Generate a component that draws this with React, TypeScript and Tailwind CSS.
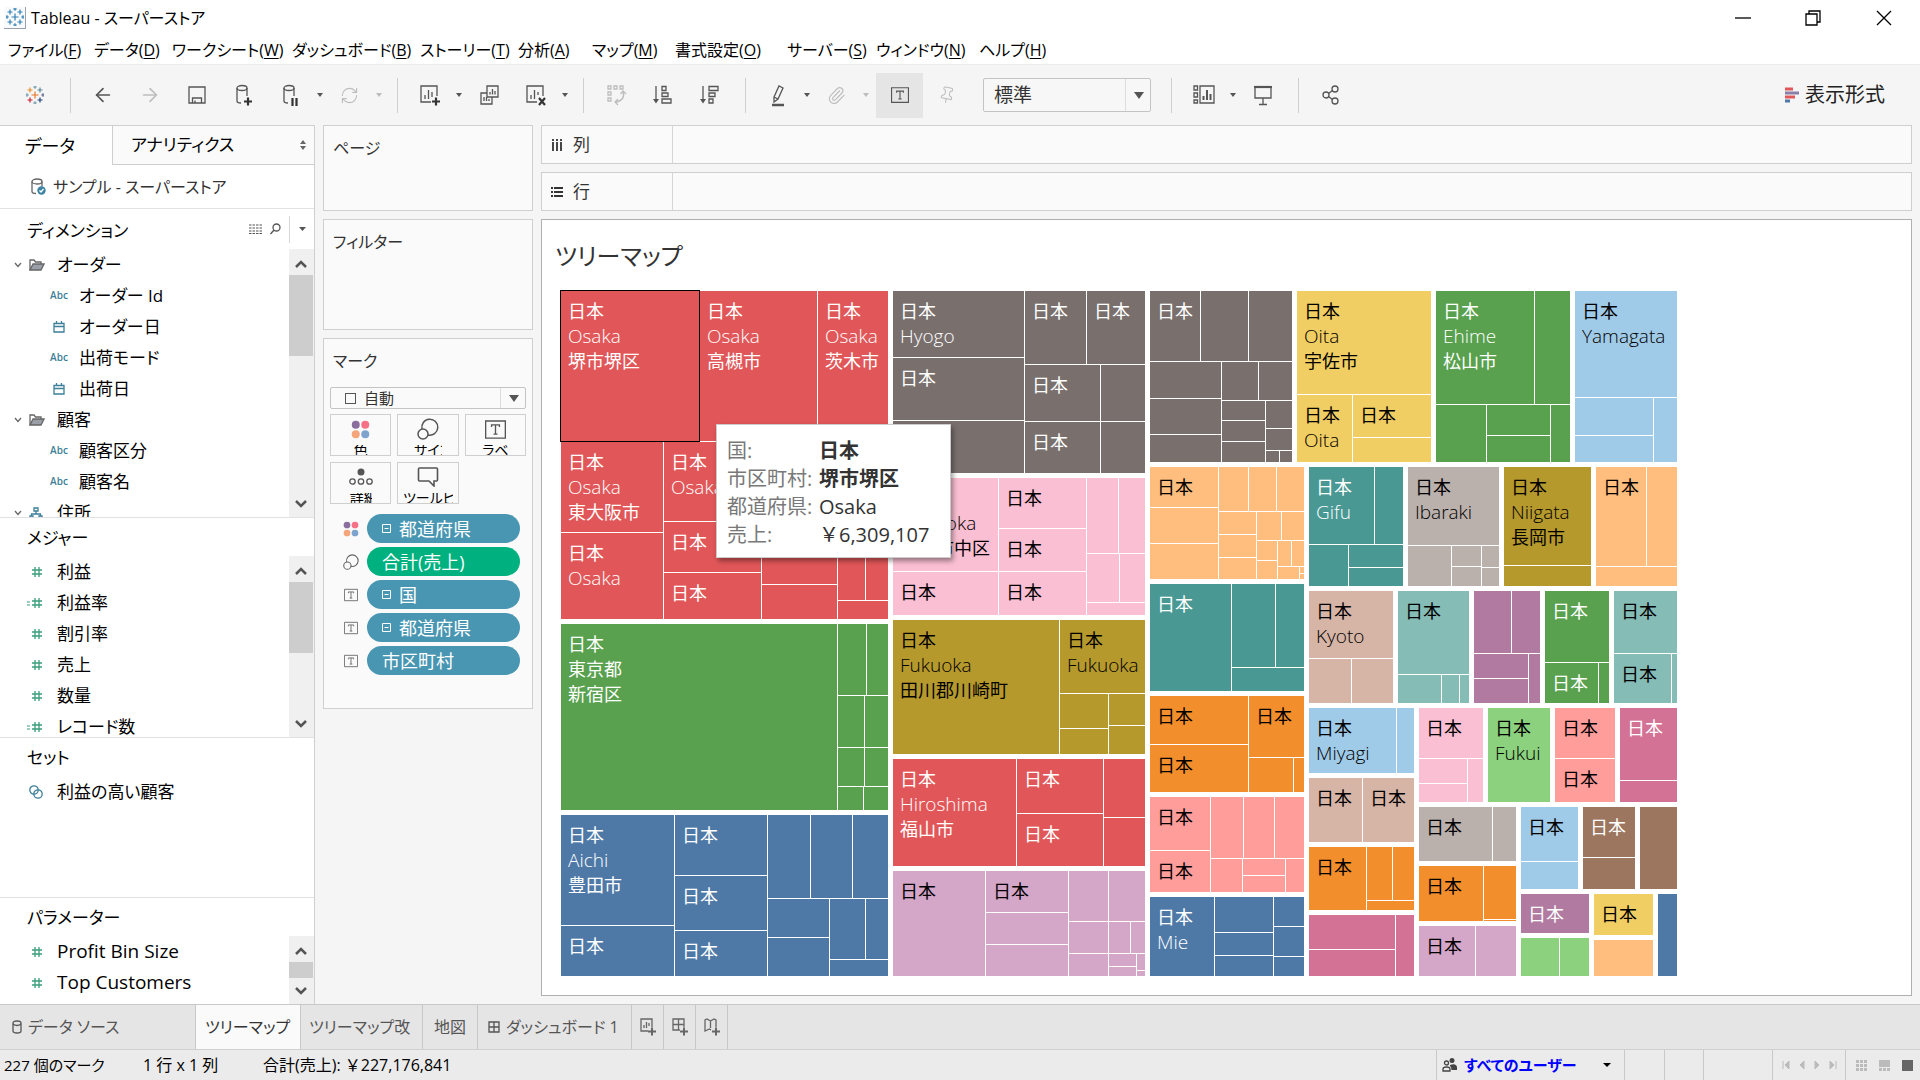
import type { ReactNode } from 'react'
import { ArrowLeft, ArrowRight, Paperclip, Pin, RefreshCw } from 'lucide-react'
import clsx from 'clsx'

/* ---------- treemap data ---------- */

interface MapNode {
    size: number
    dir?: 'row' | 'col'
    kids?: MapNode[]
    labels?: string[]
    tone?: string
    selected?: boolean
}
type Kid = MapNode | number

const toNode = (kid: Kid): MapNode => (typeof kid === 'number' ? { size: kid } : kid)
const row = (size: number, ...kids: Kid[]): MapNode => ({ size, dir: 'row', kids: kids.map(toNode) })
const col = (size: number, ...kids: Kid[]): MapNode => ({ size, dir: 'col', kids: kids.map(toNode) })
const cell = (size: number, ...labels: string[]): MapNode => ({ size, labels })
const jp = (size: number, ...labels: string[]): MapNode => ({ size, labels: ['日本', ...labels] })
const paint = (tone: string, node: MapNode): MapNode => ({ ...node, tone })

const red = 'bg-[#e15759] text-white'
const green = 'bg-[#59a14f] text-white'
const blue = 'bg-[#4e79a7] text-white'
const gray = 'bg-[#79706e] text-white'
const pink = 'bg-[#fabfd2] text-black'
const olive = 'bg-[#b6992d] text-black'
const mauve = 'bg-[#d4a6c8] text-black'
const yellow = 'bg-[#f1ce63] text-black'
const sky = 'bg-[#a0cbe8] text-black'
const peach = 'bg-[#ffbe7d] text-black'
const teal = 'bg-[#499894] text-white'
const orange = 'bg-[#f28e2b] text-black'
const salmon = 'bg-[#ff9d9a] text-black'
const tan = 'bg-[#d7b5a6] text-black'
const mint = 'bg-[#86bcb6] text-black'
const purple = 'bg-[#b07aa1] text-white'
const lime = 'bg-[#8cd17d] text-black'
const magenta = 'bg-[#d37295] text-white'
const taupe = 'bg-[#bab0ac] text-black'
const brown = 'bg-[#9d7660] text-white'

const west = col(
    327,
    paint(
        red,
        col(
            328,
            row(150, { ...jp(138, 'Osaka', '堺市堺区'), selected: true }, jp(117, 'Osaka', '高槻市'), jp(70, 'Osaka', '茨木市')),
            row(
                177,
                col(102, jp(90, 'Osaka', '東大阪市'), jp(86, 'Osaka')),
                col(97, jp(79, 'Osaka'), jp(50), jp(46)),
                col(75, 142, 34),
                col(50, row(158, 27, 22), 18)
            )
        )
    ),
    paint(
        green,
        row(186, jp(276, '東京都', '新宿区'), col(50, row(71, 28, 21), row(51, 26, 23), row(38, 26, 23), row(23, 25, 24)))
    ),
    paint(
        blue,
        row(
            161,
            col(113, jp(110, 'Aichi', '豊田市'), jp(50)),
            col(92, jp(60), jp(54), jp(45)),
            col(120, row(83, 42, 41, 35), row(77, col(61, 38, 38), col(58, row(60, 35, 22), 16)))
        )
    )
)

const middle = col(
    252,
    paint(
        gray,
        row(
            182,
            col(131, jp(66, 'Hyogo'), jp(62), jp(52)),
            col(120, row(73, jp(61), jp(58)), row(56, jp(75), 44), row(51, jp(75), 44))
        )
    ),
    paint(
        pink,
        row(
            137,
            col(105, jp(93, 'Shizuoka', '浜松市中区'), jp(43)),
            col(87, jp(50), jp(42), jp(43)),
            col(58, row(75, 31, 26), row(48, 32, 25), 12)
        )
    ),
    paint(
        olive,
        row(134, jp(166, 'Fukuoka', '田川郡川崎町'), col(85, jp(73, 'Fukuoka'), row(60, col(48, 34, 25), col(36, 31, 28))))
    ),
    paint(red, row(107, jp(123, 'Hiroshima', '福山市'), col(86, jp(54), jp(52)), col(41, 58, 48))),
    paint(
        mauve,
        row(
            105,
            jp(92),
            col(82, jp(41), 31, 31),
            col(
                76,
                row(50, 39, 36),
                row(54, col(39, 31, 22), col(36, row(31, 21, 14), row(22, col(27, 12, 9), col(8, 16, 5))))
            )
        )
    )
)

const northEast = row(
    171,
    paint(
        gray,
        col(
            142,
            row(70, jp(50), 47, 43),
            row(
                100,
                col(71, 36, 35, 27),
                col(70, row(38, 36, 33), row(61, col(43, 19, 20, 20), col(26, 27, 21, row(11, 13, 12))))
            )
        )
    ),
    paint(yellow, col(134, jp(103, 'Oita', '宇佐市'), row(67, jp(55, 'Oita'), col(78, jp(42), 24)))),
    paint(green, col(134, row(113, jp(98, 'Ehime', '松山市'), 35), row(57, 50, col(63, 30, 26), 19))),
    paint(sky, col(102, jp(106, 'Yamagata'), row(64, col(78, 37, 26), 23)))
)

const centerEast = col(
    154,
    paint(
        peach,
        row(
            112,
            col(68, jp(40), 35, 35),
            col(
                85,
                row(44, 29, 27, 27),
                row(
                    67,
                    col(37, 22, 22, 21),
                    col(47, row(28, 24, 22), row(38, col(20, 19, 18), col(26, row(25, 13, 12), row(12, 21, col(4, 6, 5)))))
                )
            )
        )
    ),
    paint(teal, row(107, jp(81), col(72, row(83, 43, 28), 23))),
    paint(orange, row(96, col(98, jp(48), jp(47)), col(55, jp(61), row(34, 44, 10)))),
    paint(salmon, row(95, col(60, jp(53), jp(41)), col(93, row(61, 32, 30, 29), row(33, 31, col(42, 16, 16), 18)))),
    paint(blue, row(79, jp(64, 'Mie'), col(58, 35, 22, 20), col(30, 29, 29, 19)))
)

const farEast = col(
    368,
    row(
        119,
        paint(teal, col(94, row(77, jp(65, 'Gifu'), 28), row(41, 39, col(54, 22, 18)))),
        paint(taupe, col(91, jp(78, 'Ibaraki'), row(40, 43, col(29, 20, 19), col(17, 21, 18)))),
        paint(olive, col(87, jp(98, 'Niigata', '長岡市'), 20)),
        paint(peach, col(81, row(99, jp(50), 30), 19))
    ),
    row(
        112,
        paint(tan, col(84, jp(67, 'Kyoto'), row(44, 42, 41))),
        paint(mint, col(71, jp(83), row(28, 43, 17, 9))),
        paint(purple, col(66, row(62, 37, 28), row(49, col(54, 24, 24), 11))),
        paint(green, col(64, jp(71), row(40, jp(53), 10))),
        paint(mint, col(63, jp(62), row(49, jp(57), 5)))
    ),
    row(
        268,
        col(
            105,
            paint(sky, row(65, jp(87, 'Miyagi'), 17)),
            paint(tan, row(64, jp(53), jp(51))),
            paint(orange, row(63, jp(57), col(47, row(53, 25, 21), 9))),
            paint(magenta, row(61, col(86, 34, 26), 18))
        ),
        col(
            258,
            row(
                94,
                paint(pink, col(64, jp(50), row(43, col(48, 24, 18), 15))),
                paint(lime, jp(62, 'Fukui')),
                paint(salmon, col(60, jp(50), jp(43))),
                paint(magenta, col(57, jp(72), 21))
            ),
            row(
                169,
                col(
                    97,
                    paint(taupe, row(54, jp(73), 23)),
                    paint(orange, row(55, jp(64), col(32, 53, 1))),
                    paint(mauve, row(50, jp(56), 40))
                ),
                col(
                    156,
                    row(
                        82,
                        paint(sky, col(57, jp(54), 27)),
                        paint(brown, col(52, jp(50), 31)),
                        paint(brown, cell(37))
                    ),
                    row(
                        82,
                        col(68, paint(purple, jp(39)), paint(lime, row(38, 38, 29))),
                        col(59, paint(yellow, jp(41)), paint(peach, cell(36))),
                        paint(blue, cell(19))
                    )
                )
            )
        )
    )
)

const treemap = row(1116, west, middle, col(527, northEast, row(509, centerEast, farEast)))

function Tile({ node, tone }: { node: MapNode; tone?: string }) {
    const fill = node.tone ?? tone
    const style = { flexGrow: node.size }
    if (node.kids) {
        return (
            <div
                style={style}
                className={clsx(
                    'flex min-h-0 min-w-0 basis-0',
                    node.dir === 'col' ? 'flex-col' : 'flex-row',
                    fill ? 'gap-px' : 'gap-[5px]'
                )}
            >
                {node.kids.map((kid, i) => (
                    <Tile key={i} node={kid} tone={fill} />
                ))}
            </div>
        )
    }
    return (
        <div
            style={style}
            className={clsx(
                'min-h-0 min-w-0 basis-0 overflow-hidden whitespace-nowrap',
                fill,
                node.selected && 'relative z-10 ring-1 ring-black'
            )}
        >
            {node.labels && (
                <div className="pt-2 pl-[7px] leading-[25px]">
                    {node.labels.map((label) => (
                        <div key={label} className={/[a-z]/.test(label) ? 'text-[19px] leading-[25px] font-light' : 'text-lg leading-[25px]'}>
                            {label}
                        </div>
                    ))}
                </div>
            )}
        </div>
    )
}

/* ---------- icons ---------- */

function Svg({ w = 24, h = 24, children, className }: { w?: number; h?: number; children: ReactNode; className?: string }) {
    return (
        <svg
            width={w}
            height={h}
            viewBox={`0 0 ${w} ${h}`}
            fill="none"
            stroke="currentColor"
            strokeWidth="1.3"
            className={clsx('shrink-0', className)}
            aria-hidden="true"
        >
            {children}
        </svg>
    )
}

function Logo({ mono }: { mono?: boolean }) {
    const marks: [number, number, number, string][] = [
        [10, 10, 3.5, '#e8762c'],
        [5, 5, 2.5, '#e8912c'],
        [15, 5, 2.5, '#5b879b'],
        [5, 15, 2.5, '#c72035'],
        [15, 15, 2.5, '#1f457e'],
        [10, 2, 1.8, '#7199a6'],
        [10, 18, 1.8, '#7199a6'],
        [2, 10, 1.8, '#7199a6'],
        [18, 10, 1.8, '#5b6591'],
    ]
    return (
        <Svg w={18} h={18}>
            {marks.map(([x, y, r, color]) => (
                <path
                    key={`${x}-${y}`}
                    d={`M${x - r - 1} ${y - 1}H${x + r - 1}M${x - 1} ${y - r - 1}V${y + r - 1}`}
                    stroke={mono ? '#2f7fb5' : color}
                    strokeWidth="1.2"
                />
            ))}
        </Svg>
    )
}

function Caret({ className }: { className?: string }) {
    return (
        <svg width="10" height="7" viewBox="0 0 10 7" className={clsx('shrink-0', className)} aria-hidden="true">
            <path d="M0 0h10L5 7z" fill="currentColor" />
        </svg>
    )
}

const DataAdd = () => (
    <Svg>
        <ellipse cx="10" cy="5" rx="5" ry="2.5" />
        <path d="M5 5v13c0 1.500 2 2 4 2M15 5v8" />
        <path d="M12 18.500h8M16 14.500v8" strokeWidth="2.200" className="text-[#333]" />
    </Svg>
)
const DataPause = () => (
    <Svg>
        <ellipse cx="10" cy="5" rx="5" ry="2.5" />
        <path d="M5 5v13c0 1.500 2 2 4 2M15 5v8" />
        <path d="M13.500 15v8M17.500 15v8" strokeWidth="2.200" className="text-[#333]" />
    </Svg>
)
const Save = () => (
    <Svg w={18} h={18}>
        <path d="M1 1h16v16H1zM4.500 17v-5h9v5M7 17v-2.500" />
    </Svg>
)
const SheetAdd = () => (
    <Svg>
        <path d="M13 19H3V3h16v10M7 16v-4M10.500 16V7M14 14V9" />
        <path d="M14 18.500h8M18 14.500v8" strokeWidth="2.200" className="text-[#333]" />
    </Svg>
)
const SheetCopy = () => (
    <Svg>
        <path d="M10 3h11v11H10zM10 10H4v11h11v-7M13 11.500V9M15.500 11.500V6M18 11.500V8M7 18v-4M9.500 18v-4M12 18v-2" />
    </Svg>
)
const SheetClear = () => (
    <Svg>
        <path d="M13 19H3V3h16v10M7 16v-4M10.500 16V7M14 12V9" />
        <path d="M15 15l6 7M21 15l-6 7" strokeWidth="2.200" className="text-[#333]" />
    </Svg>
)
const Swap = () => (
    <Svg>
        <path d="M4 3h3v3H4zM10 3h3v3h-3zM16 3h3v3h-3zM4 9h3v3H4zM4 15h3v3H4zM19 9c2 5-1 9-7 10M16.500 11l2.500-3 3 3M14 16l-3 3 3 3" />
    </Svg>
)
const SortAsc = () => (
    <Svg>
        <path d="M5 3v14M11 3.500h4v4h-4zM11 10h6v3.500h-6zM11 16h9v4h-9z" />
        <path d="M2 16h6l-3 4.500z" fill="currentColor" stroke="none" />
    </Svg>
)
const SortDesc = () => (
    <Svg>
        <path d="M5 3v14M11 3.500h9v4h-9zM11 10h6v3.500h-6zM11 16h4v4h-4z" />
        <path d="M2 16h6l-3 4.500z" fill="currentColor" stroke="none" />
    </Svg>
)
const Highlighter = () => (
    <Svg>
        <path d="M8 14l5-11 4 2-5 11-4 3zM8 14l4 2" />
        <path d="M6 22h12" strokeWidth="2.500" />
    </Svg>
)
const FitCards = () => (
    <Svg>
        <path d="M2 3h3.500v4H2zM2 10h3.500v4H2zM2 17h3.500v3H2zM8 3h14v17H8z" />
        <path d="M11.500 17v-4M15 17V7M18.500 17v-6" strokeWidth="2" />
    </Svg>
)
const Present = () => (
    <Svg>
        <path d="M4 5v10h16V5M12 15v6M8 21.500h8" />
        <path d="M3 4h18" strokeWidth="2.200" />
    </Svg>
)
const Share = () => (
    <Svg>
        <circle cx="7" cy="12" r="3" />
        <circle cx="16" cy="6" r="3" />
        <circle cx="16" cy="18" r="3" />
        <path d="M9.500 10.500l4-3M9.500 13.500l4 3" />
    </Svg>
)
const TextMark = ({ size = 15 }: { size?: number }) => (
    <svg width={size} height={size} viewBox="0 0 16 16" fill="none" stroke="currentColor" className="shrink-0" aria-hidden="true">
        <path d="M.5 1.500h15v13H.5z" />
        <path d="M5 6V4.500h6V6M8 4.500v7M6.500 11.500h3" />
    </svg>
)
const ColorDots = ({ size = 19 }: { size?: number }) => (
    <svg width={size} height={size} viewBox="0 0 20 20" className="shrink-0" aria-hidden="true">
        <circle cx="5" cy="5" r="4.200" fill="#8a6f9e" />
        <circle cx="15" cy="5" r="4.200" fill="#f77186" />
        <circle cx="5" cy="15" r="4.200" fill="#f4a57a" />
        <circle cx="15" cy="15" r="4.200" fill="#7ea3cd" />
    </svg>
)
const SizeMark = ({ size = 22 }: { size?: number }) => (
    <svg width={size} height={size} viewBox="0 0 22 22" fill="none" stroke="currentColor" strokeWidth="1.500" className="shrink-0" aria-hidden="true">
        <path d="M5 11a8 8 0 1 1 6 6" />
        <circle cx="6" cy="16" r="5" />
    </svg>
)
const DetailMark = () => (
    <Svg w={24} h={18}>
        <circle cx="12" cy="4" r="3.500" fill="currentColor" stroke="none" />
        <circle cx="3.500" cy="13.500" r="2.700" />
        <circle cx="12" cy="13.500" r="2.700" />
        <circle cx="20.500" cy="13.500" r="2.700" />
    </Svg>
)
const TooltipMark = () => (
    <Svg w={22} h={20}>
        <path d="M2.500 1h17q1 0 1 1v11q0 1-1 1H17v5l-5-5H2.500q-1 0-1-1V2q0-1 1-1z" strokeWidth="1.600" />
    </Svg>
)
const HashMark = () => (
    <Svg w={12} h={12} className="text-[#3a9d7c]">
        <path d="M4 1v10M8 1v10M1 4h10M1 8h10" />
    </Svg>
)
const CalendarMark = () => (
    <Svg w={12} h={12} className="text-[#3d7f99]">
        <path d="M1 2.500h10v8.500H1zM1 5.500h10M3.500 0v3M8.500 0v3" />
    </Svg>
)
const Folder = () => (
    <Svg w={16} h={12} className="text-[#666]">
        <path d="M1 11V1h4l1.500 2H12v2" />
        <path d="M1 11l3-6h11l-3 6z" fill="#9a9fa8" />
    </Svg>
)
const Hierarchy = () => (
    <Svg w={14} h={12} className="text-[#3d7f99]">
        <path d="M5 1h4v3H5zM7 4v3M2.500 9V7h9v2M1 9h3v3H1zM10 9h3v3h-3z" />
    </Svg>
)
const Chevron = () => (
    <Svg w={8} h={6} className="text-[#666]">
        <path d="M1 1l3 3.500L7 1" />
    </Svg>
)
const SheetPlus = ({ d }: { d: string }) => (
    <Svg w={18} h={18} className="text-[#666]">
        <path d={d} />
        <path d="M9 13.500h8M13 9.500v8" strokeWidth="2" />
    </Svg>
)

/* ---------- chrome ---------- */

const menus = [
    { label: 'ファイル', hotkey: 'F', width: 'w-[86px]' },
    { label: 'データ', hotkey: 'D', width: 'w-[78px]' },
    { label: 'ワークシート', hotkey: 'W', width: 'w-[120px]' },
    { label: 'ダッシュボード', hotkey: 'B', width: 'w-[128px]' },
    { label: 'ストーリー', hotkey: 'T', width: 'w-[98px]' },
    { label: '分析', hotkey: 'A', width: 'w-[74px]' },
    { label: 'マップ', hotkey: 'M', width: 'w-[83px]' },
    { label: '書式設定', hotkey: 'O', width: 'w-[112px]' },
    { label: 'サーバー', hotkey: 'S', width: 'w-[89px]' },
    { label: 'ウィンドウ', hotkey: 'N', width: 'w-[103px]' },
    { label: 'ヘルプ', hotkey: 'H', width: 'w-[76px]' },
]

function TitleBar() {
    return (
        <header className="bg-white">
            <div className="flex h-[35px] items-center pl-1">
                <span className="flex h-[22px] w-[22px] items-center justify-center border-r border-b border-gray-400 bg-gray-50">
                    <Logo mono />
                </span>
                <h1 className="ml-[5px] text-base">Tableau - スーパーストア</h1>
                <div className="ml-auto flex">
                    <button aria-label="最小化" className="flex w-[70px] justify-center">
                        <Svg w={16} h={16}><path d="M0 8h16" /></Svg>
                    </button>
                    <button aria-label="元に戻す" className="flex w-[69px] justify-center">
                        <Svg w={16} h={16}><path d="M1 4h11v11H1zM4 4V1h11v11h-3" /></Svg>
                    </button>
                    <button aria-label="閉じる" className="flex w-[73px] justify-center">
                        <Svg w={16} h={16}><path d="M1 1l14 14M15 1L1 15" /></Svg>
                    </button>
                </div>
            </div>
            <nav className="flex h-[29px] items-center pl-2 text-base">
                {menus.map((menu) => (
                    <button key={menu.hotkey} className={clsx('shrink-0 text-left whitespace-nowrap', menu.width)}>
                        {menu.label}(<span className="underline underline-offset-2">{menu.hotkey}</span>)
                    </button>
                ))}
            </nav>
        </header>
    )
}

function Tool({ name, children, dim, active }: { name: string; children: ReactNode; dim?: boolean; active?: boolean }) {
    return (
        <button
            aria-label={name}
            className={clsx(
                'flex h-[45px] w-[47px] shrink-0 items-center justify-center',
                dim ? 'text-[#bdbdbd]' : 'text-[#555]',
                active && 'ml-1 bg-[#e5e5e5]'
            )}
        >
            {children}
        </button>
    )
}

function Drop({ dim }: { dim?: boolean }) {
    return (
        <button aria-label="その他" className={clsx('flex w-3 shrink-0 justify-center', dim ? 'text-[#bdbdbd]' : 'text-[#555]')}>
            <svg width="6" height="4" viewBox="0 0 6 4" aria-hidden="true">
                <path d="M0 0h6L3 4z" fill="currentColor" />
            </svg>
        </button>
    )
}

const Divider = () => <span className="mr-2 ml-3 h-[35px] w-px shrink-0 bg-[#cfcfcf]" />

function Toolbar() {
    return (
        <div className="flex h-[61px] items-center border-t border-[#ececec] bg-[#f5f5f5] pl-[11px]">
            <Tool name="スタート ページ"><Logo /></Tool>
            <Divider />
            <Tool name="元に戻す"><ArrowLeft size={22} strokeWidth={1.8} /></Tool>
            <Tool name="やり直し" dim><ArrowRight size={22} strokeWidth={1.8} /></Tool>
            <Tool name="保存"><Save /></Tool>
            <Tool name="新しいデータ ソース"><DataAdd /></Tool>
            <Tool name="自動更新の一時停止"><DataPause /></Tool>
            <Drop />
            <Tool name="更新" dim><RefreshCw size={19} strokeWidth={1.4} /></Tool>
            <Drop dim />
            <Divider />
            <Tool name="新しいワークシート"><SheetAdd /></Tool>
            <Drop />
            <Tool name="複製"><SheetCopy /></Tool>
            <Tool name="シートのクリア"><SheetClear /></Tool>
            <Drop />
            <Divider />
            <Tool name="行と列の交換" dim><Swap /></Tool>
            <Tool name="昇順"><SortAsc /></Tool>
            <Tool name="降順"><SortDesc /></Tool>
            <Divider />
            <Tool name="ハイライト"><Highlighter /></Tool>
            <Drop />
            <Tool name="メンバーのグループ化" dim><Paperclip size={19} strokeWidth={1.4} /></Tool>
            <Drop dim />
            <Tool name="マーク ラベルの表示" active><TextMark size={18} /></Tool>
            <Tool name="軸の固定" dim><Pin size={18} strokeWidth={1.4} className="rotate-12" /></Tool>
            <label className="relative ml-[13px] flex shrink-0 items-center">
                <span className="sr-only">サイズの調整</span>
                <select className="h-[34px] w-[168px] appearance-none rounded-xs border border-[#c4c4c4] bg-[#f7f7f7] pl-[10px] text-[19px] leading-8 text-[#333]">
                    <option>標準</option>
                    <option>幅を合わせる</option>
                    <option>ビュー全体</option>
                </select>
                <span className="pointer-events-none absolute right-0 flex h-[32px] w-[26px] items-center justify-center border-l border-[#ddd] text-[#555]">
                    <Caret />
                </span>
            </label>
            <span className="w-2" />
            <Divider />
            <Tool name="カードの表示"><FitCards /></Tool>
            <Drop />
            <Tool name="プレゼンテーション モード"><Present /></Tool>
            <Divider />
            <Tool name="共有"><Share /></Tool>
            <button className="mr-[35px] ml-auto flex items-center gap-[6px] text-xl text-[#222]">
                <Svg w={15} h={16}>
                    <path d="M1 2h8" stroke="#e15759" strokeWidth="3" />
                    <path d="M1 6h14" stroke="#8a7fa8" strokeWidth="3" />
                    <path d="M1 10h10" stroke="#e15759" strokeWidth="3" />
                    <path d="M1 14h5" stroke="#4e79a7" strokeWidth="3" />
                </Svg>
                表示形式
            </button>
        </div>
    )
}

/* ---------- data pane ---------- */

function ScrollBar({ thumb }: { thumb: string }) {
    return (
        <div className="flex w-[25px] shrink-0 flex-col bg-[#f0f0f0] pr-px text-[#555]">
            <span className="flex h-[26px] shrink-0 items-center justify-center pt-1">
                <Svg w={12} h={10}><path d="M1 8l5-5 5 5" strokeWidth="2.500" /></Svg>
            </span>
            <span className={clsx('shrink-0 bg-[#cdcdcd]', thumb)} />
            <span className="mt-auto flex h-[26px] shrink-0 items-center justify-center">
                <Svg w={12} h={10}><path d="M1 2l5 5 5-5" strokeWidth="2.500" /></Svg>
            </span>
        </div>
    )
}

const dimensions = [
    { kind: 'folder', name: 'オーダー' },
    { kind: 'abc', name: 'オーダー Id' },
    { kind: 'date', name: 'オーダー日' },
    { kind: 'abc', name: '出荷モード' },
    { kind: 'date', name: '出荷日' },
    { kind: 'folder', name: '顧客' },
    { kind: 'abc', name: '顧客区分' },
    { kind: 'abc', name: '顧客名' },
    { kind: 'tree', name: '住所' },
]

const measures = [
    { name: '利益' },
    { name: '利益率', calc: true },
    { name: '割引率' },
    { name: '売上' },
    { name: '数量' },
    { name: 'レコード数', calc: true },
]

function DimensionRow({ kind, name }: { kind: string; name: string }) {
    const parent = kind === 'folder' || kind === 'tree'
    return (
        <li className="h-[31px]">
            <button className="flex h-full w-full items-center text-left">
                {parent ? (
                    <span className="flex w-[57px] items-center gap-[7px] pl-[14px]">
                        <Chevron />
                        {kind === 'folder' ? <Folder /> : <Hierarchy />}
                    </span>
                ) : (
                    <span className="flex w-[79px] justify-center pl-[39px]">
                        {kind === 'abc' ? (
                            <span className="text-[10px] font-semibold text-[#3d7f99]">Abc</span>
                        ) : (
                            <CalendarMark />
                        )}
                    </span>
                )}
                {name}
            </button>
        </li>
    )
}

function MeasureRow({ name, calc }: { name: string; calc?: boolean }) {
    return (
        <li className="h-[31px]">
            <button className="flex h-full w-full items-center text-left">
                <span className="flex w-[57px] items-center pl-[27px] text-[#3a9d7c]">
                    <Svg w={4} h={12}>{calc && <path d="M0 5h3M0 8h3" strokeWidth="1" />}</Svg>
                    <HashMark />
                </span>
                {name}
            </button>
        </li>
    )
}

const paneTitle = 'pl-[27px] text-[17px] leading-6'

function DataPane() {
    return (
        <aside className="flex w-[315px] shrink-0 flex-col border-t border-r border-[#cfcfcf] bg-white">
            <div className="flex h-[39px] shrink-0 text-lg">
                <button className="w-[112px] pr-3">データ</button>
                <button className="flex flex-1 items-center justify-between border-b border-l border-[#cfcfcf] bg-[#fafafa] pr-2 pl-[18px] text-[17px]">
                    アナリティクス
                    <Svg w={6} h={10} className="text-[#666]">
                        <path d="M0 4l3-4 3 4zM0 6l3 4 3-4z" fill="currentColor" stroke="none" />
                    </Svg>
                </button>
            </div>
            <button className="flex h-[44px] shrink-0 items-center gap-[7px] border-b border-[#e2e2e2] pl-[31px] text-base text-[#333]">
                <Svg w={15} h={18} className="text-[#666]">
                    <ellipse cx="6" cy="3.500" rx="5" ry="2.500" />
                    <path d="M1 3.500v10c0 1.500 2 2 4 2M11 3.500v5" />
                    <circle cx="10.500" cy="12.500" r="4.200" fill="#3d83a3" stroke="none" />
                    <path d="M8.500 12.500l1.500 1.500 2.500-3" stroke="white" />
                </Svg>
                サンプル - スーパーストア
            </button>

            <section className="flex h-[309px] shrink-0 flex-col border-b border-[#e2e2e2]">
                <div className="flex h-[40px] shrink-0 items-center text-[#555]">
                    <h2 className={clsx(paneTitle, 'flex-1 pt-1 text-black')}>ディメンション</h2>
                    <button aria-label="リスト表示">
                        <Svg w={13} h={10}>
                            <path d="M0 1h13M0 4h13M0 7h13M0 9.500h13" strokeDasharray="2.500 1" strokeWidth="1.200" />
                        </Svg>
                    </button>
                    <button aria-label="検索" className="ml-2">
                        <Svg w={11} h={12}>
                            <circle cx="6.500" cy="4.500" r="3.500" />
                            <path d="M4 7l-3.500 4" />
                        </Svg>
                    </button>
                    <span className="ml-2 h-[27px] w-px bg-[#d5d5d5]" />
                    <button aria-label="メニュー" className="flex w-[24px] justify-center">
                        <svg width="7" height="4" viewBox="0 0 7 4"><path d="M0 0h7L3.500 4z" fill="currentColor" /></svg>
                    </button>
                </div>
                <div className="flex min-h-0 flex-1">
                    <ul className="flex-1 overflow-hidden text-[17px]">
                        {dimensions.map((field) => (
                            <DimensionRow key={field.name} {...field} />
                        ))}
                    </ul>
                    <ScrollBar thumb="h-[81px]" />
                </div>
            </section>

            <section className="flex h-[220px] shrink-0 flex-col border-b border-[#e2e2e2]">
                <h2 className={clsx(paneTitle, 'h-[38px] shrink-0 pt-2')}>メジャー</h2>
                <div className="flex min-h-0 flex-1">
                    <ul className="flex-1 overflow-hidden text-[17px]">
                        {measures.map((field) => (
                            <MeasureRow key={field.name} {...field} />
                        ))}
                    </ul>
                    <ScrollBar thumb="h-[71px]" />
                </div>
            </section>

            <section className="flex-1 border-b border-[#e2e2e2] text-[17px]">
                <h2 className={clsx(paneTitle, 'h-[38px] pt-2')}>セット</h2>
                <button className="flex h-[31px] w-full items-center pl-[29px]">
                    <Svg w={14} h={14} className="mr-[14px] text-[#3d7f99]">
                        <circle cx="5" cy="5" r="4.200" />
                        <circle cx="9" cy="9" r="4.200" />
                    </Svg>
                    利益の高い顧客
                </button>
            </section>

            <section className="flex h-[106px] shrink-0 flex-col">
                <h2 className={clsx(paneTitle, 'h-[38px] shrink-0 pt-2')}>パラメーター</h2>
                <div className="flex min-h-0 flex-1">
                    <ul className="flex-1 overflow-hidden text-[19px]">
                        <MeasureRow name="Profit Bin Size" />
                        <MeasureRow name="Top Customers" />
                    </ul>
                    <ScrollBar thumb="h-4" />
                </div>
            </section>
        </aside>
    )
}

/* ---------- shelves and marks ---------- */

const card = 'border border-[#cfcfcf] bg-[#fafafa] px-[6px]'
const cardTitle = 'pl-[3px] text-base leading-6 text-[#333]'

function MarkButton({ icon, label, width }: { icon: ReactNode; label: string; width: string }) {
    return (
        <button className="flex h-[42px] flex-col items-center border border-[#cfcfcf] bg-[#fafafa] text-[#555]">
            <span className="flex h-[26px] items-center pt-[2px]">{icon}</span>
            <span className={clsx('mt-1 flex h-[10px] items-center overflow-hidden text-sm whitespace-nowrap text-black', width)}>
                {label}
            </span>
        </button>
    )
}

const pills = [
    { icon: <ColorDots size={16} />, name: '都道府県', level: true },
    { icon: <SizeMark size={16} />, name: '合計(売上)', measure: true },
    { icon: <TextMark size={14} />, name: '国', level: true },
    { icon: <TextMark size={14} />, name: '都道府県', level: true },
    { icon: <TextMark size={14} />, name: '市区町村' },
]

function Cards() {
    return (
        <div className="flex w-[210px] shrink-0 flex-col gap-2">
            <section className={clsx(card, 'h-[86px] pt-[10px]')}>
                <h2 className={cardTitle}>ページ</h2>
            </section>
            <section className={clsx(card, 'h-[111px] pt-[10px]')}>
                <h2 className={cardTitle}>フィルター</h2>
            </section>
            <section className={clsx(card, 'pt-[10px] pb-[33px]')}>
                <h2 className={cardTitle}>マーク</h2>
                <label className="relative mt-[14px] flex items-center text-[#555]">
                    <span className="sr-only">マークの種類</span>
                    <select className="h-[22px] w-full appearance-none rounded-xs border border-[#c4c4c4] bg-[#fafafa] pl-[33px] text-[15px] leading-5 text-[#333]">
                        <option>自動</option>
                        <option>四角</option>
                        <option>円</option>
                    </select>
                    <span className="pointer-events-none absolute left-[15px] h-[11px] w-[11px] border border-[#555]" />
                    <span className="pointer-events-none absolute right-0 flex h-[20px] w-[26px] items-center justify-center border-l border-[#ddd]">
                        <Caret />
                    </span>
                </label>
                <div className="mt-[5px] grid grid-cols-3 gap-[6px]">
                    <MarkButton icon={<ColorDots />} label="色" width="w-[14px]" />
                    <MarkButton icon={<SizeMark />} label="サイズ" width="w-[28px]" />
                    <MarkButton icon={<TextMark size={21} />} label="ラベル" width="w-[26px]" />
                    <MarkButton icon={<DetailMark />} label="詳細" width="w-[22px]" />
                    <MarkButton icon={<TooltipMark />} label="ツールヒント" width="w-[50px]" />
                </div>
                <ul className="mt-[10px] flex flex-col gap-1">
                    {pills.map((pill, i) => (
                        <li key={i} className="flex items-center text-[#666]">
                            <span className="flex w-[37px] justify-center pl-1">{pill.icon}</span>
                            <button
                                className={clsx(
                                    'flex h-[29px] w-[153px] items-center gap-2 rounded-full pl-[15px] text-lg leading-6 text-white',
                                    pill.measure ? 'bg-[#00b180]' : 'bg-[#4996b2]'
                                )}
                            >
                                {pill.level && (
                                    <Svg w={9} h={9}><path d="M.5.5h8v8h-8zM2.500 4.500h4" strokeWidth="1" /></Svg>
                                )}
                                {pill.name}
                            </button>
                        </li>
                    ))}
                </ul>
            </section>
        </div>
    )
}

function Shelf({ name, icon }: { name: string; icon: ReactNode }) {
    return (
        <section className="flex h-[39px] shrink-0 border border-[#cfcfcf] bg-[#fafafa] text-[#555]">
            <h2 className="flex w-[131px] items-center gap-[10px] border-r border-[#d5d5d5] pl-[9px] text-[17px] text-[#333]">
                {icon}
                {name}
            </h2>
        </section>
    )
}

function MapTooltip() {
    const fields = [
        ['国:', '日本'],
        ['市区町村:', '堺市堺区'],
        ['都道府県:', 'Osaka'],
        ['売上:', '￥6,309,107'],
    ]
    return (
        <dl className="absolute top-[133px] left-[155px] z-20 grid h-[134px] w-[235px] grid-cols-[92px_1fr] content-center border border-[#ccc] bg-white pt-1 pl-[10px] text-xl leading-7 whitespace-nowrap text-[#333] shadow-[2px_3px_5px_rgba(0,0,0,0.4)]">
            {fields.map(([name, value], i) => (
                <div key={name} className="contents">
                    <dt className="text-[#787878]">{name}</dt>
                    <dd className={clsx(i < 2 && 'font-bold', i === 3 && '[font-feature-settings:normal]')}>{value}</dd>
                </div>
            ))}
        </dl>
    )
}

function Worksheet() {
    return (
        <main className="flex min-w-0 flex-1 flex-col gap-2">
            <Shelf
                name="列"
                icon={<Svg w={12} h={12}><path d="M2 0v2M6 0v2M10 0v2M2 3v9M6 3v9M10 3v9" strokeWidth="1.800" /></Svg>}
            />
            <Shelf
                name="行"
                icon={<Svg w={12} h={12}><path d="M0 2h2M0 6h2M0 10h2M3 2h9M3 6h9M3 10h9" strokeWidth="1.800" /></Svg>}
            />
            <section className="flex min-h-0 flex-1 flex-col border border-[#b0b0b0] bg-white pr-[234px] pb-[19px] pl-[19px]">
                <h2 className="-ml-[6px] flex h-[71px] shrink-0 items-center text-2xl text-[#333]">ツリーマップ</h2>
                <div className="relative flex min-h-0 flex-1">
                    <Tile node={treemap} />
                    <MapTooltip />
                </div>
            </section>
        </main>
    )
}

/* ---------- bottom bars ---------- */

function SheetTabs() {
    const tab = 'flex items-center border-r border-[#c8c8c8] whitespace-nowrap'
    return (
        <nav className="flex h-[45px] shrink-0 border-t border-[#c8c8c8] bg-[#e5e5e5] text-base text-[#555]">
            <button className={clsx(tab, 'w-[196px] gap-[6px] pl-3')}>
                <Svg w={10} h={14}>
                    <path d="M1 3q0-2 4-2t4 2v8q0 2-4 2t-4-2zM1 3.500q1 2 4 2t4-2" />
                </Svg>
                データ ソース
            </button>
            <button className={clsx(tab, 'w-[105px] pl-[9px] bg-[#fafafa] text-[#333]')}>ツリーマップ</button>
            <button className={clsx(tab, 'w-[122px] pl-2')}>ツリーマップ改</button>
            <button className={clsx(tab, 'w-[55px] justify-center')}>地図</button>
            <button className={clsx(tab, 'w-[154px] gap-[6px] pl-[10px]')}>
                <Svg w={12} h={12}><path d="M1 1h10v10H1zM6 1v10M1 6h10" /></Svg>
                ダッシュボード 1
            </button>
            <button aria-label="新しいワークシート" className={clsx(tab, 'w-8 justify-center')}>
                <SheetPlus d="M9 13H2V1h11v8M5 10V7M7.500 10V4M10 8V5" />
            </button>
            <button aria-label="新しいダッシュボード" className={clsx(tab, 'w-8 justify-center')}>
                <SheetPlus d="M9 12H2V1h11v8M7.500 1v11M2 6.500h11" />
            </button>
            <button aria-label="新しいストーリー" className={clsx(tab, 'w-8 justify-center')}>
                <SheetPlus d="M8 12l-1.500-1L2 13V2l2-1 3.500 2L11 1l2 1v7M7.500 3v7" />
            </button>
        </nav>
    )
}

function StatusBar() {
    const box = 'h-full border-l border-[#c8c8c8]'
    return (
        <footer className="flex h-[31px] shrink-0 items-center border-t border-[#d0d0d0] bg-[#ebebeb] text-[15px] whitespace-nowrap">
            <span className="w-[139px] pl-1">227 個のマーク</span>
            <span className="w-[124px] pl-1 text-base">1 行 x 1 列</span>
            <span className="text-base [font-feature-settings:normal]">合計(売上): ￥227,176,841</span>
            <button className={clsx(box, 'ml-auto flex w-[188px] items-center pl-[5px] font-bold text-[#0000ff]')}>
                <Svg w={15} h={14} className="mr-[7px] text-[#444]">
                    <circle cx="4.500" cy="5" r="2" />
                    <path d="M1 13v-2q0-2 3.500-2t3.500 2v2z" />
                    <circle cx="10" cy="2.500" r="2.500" fill="currentColor" stroke="none" />
                    <path d="M8 7q6-2 7 2v3H9.500q0-3-1.500-4z" fill="currentColor" stroke="none" />
                </Svg>
                すべてのユーザー
                <svg width="8" height="4" viewBox="0 0 8 4" className="mr-[13px] ml-auto text-black">
                    <path d="M0 0h8L4 4z" fill="currentColor" />
                </svg>
            </button>
            <span className={clsx(box, 'w-[40px]')} />
            <span className={clsx(box, 'w-[39px]')} />
            <span className={clsx(box, 'w-[69px]')} />
            <div className={clsx(box, 'flex w-[73px] items-center justify-between pr-2 pl-[9px] text-[#bbb]')}>
                {['M1 0v8M7 0v8L3 4z', 'M6 0v8L2 4z', 'M2 0v8l4-4z', 'M7 0v8M1 0v8l4-4z'].map((d) => (
                    <button key={d} aria-label="シートの移動">
                        <Svg w={8} h={8}><path d={d} fill="currentColor" strokeWidth="1" /></Svg>
                    </button>
                ))}
            </div>
            <div className={clsx(box, 'flex w-[75px] items-center gap-3 pl-[10px] text-[#bbb]')}>
                <button aria-label="シート ソーター">
                    <Svg w={11} h={11}><path d="M0 1.500h11M0 5.500h11M0 9.500h11" strokeDasharray="3 1" strokeWidth="3" /></Svg>
                </button>
                <button aria-label="フィルムストリップ">
                    <Svg w={11} h={11}>
                        <path d="M0 3.500h11" strokeWidth="7" />
                        <path d="M0 9.500h11" strokeDasharray="3 1" strokeWidth="3" />
                    </Svg>
                </button>
                <button aria-label="タブ表示" className="h-[11px] w-[11px] bg-[#666]" />
            </div>
        </footer>
    )
}

export default function App() {
    return (
        <div className="flex h-screen flex-col overflow-hidden bg-[#f5f5f5] font-['Open_Sans','Noto_Sans_CJK_JP',sans-serif] text-black [font-feature-settings:'palt']">
            <TitleBar />
            <Toolbar />
            <div className="flex min-h-0 flex-1">
                <DataPane />
                <div className="flex min-w-0 flex-1 gap-2 pr-2 pb-2 pl-2">
                    <Cards />
                    <Worksheet />
                </div>
            </div>
            <SheetTabs />
            <StatusBar />
        </div>
    )
}
